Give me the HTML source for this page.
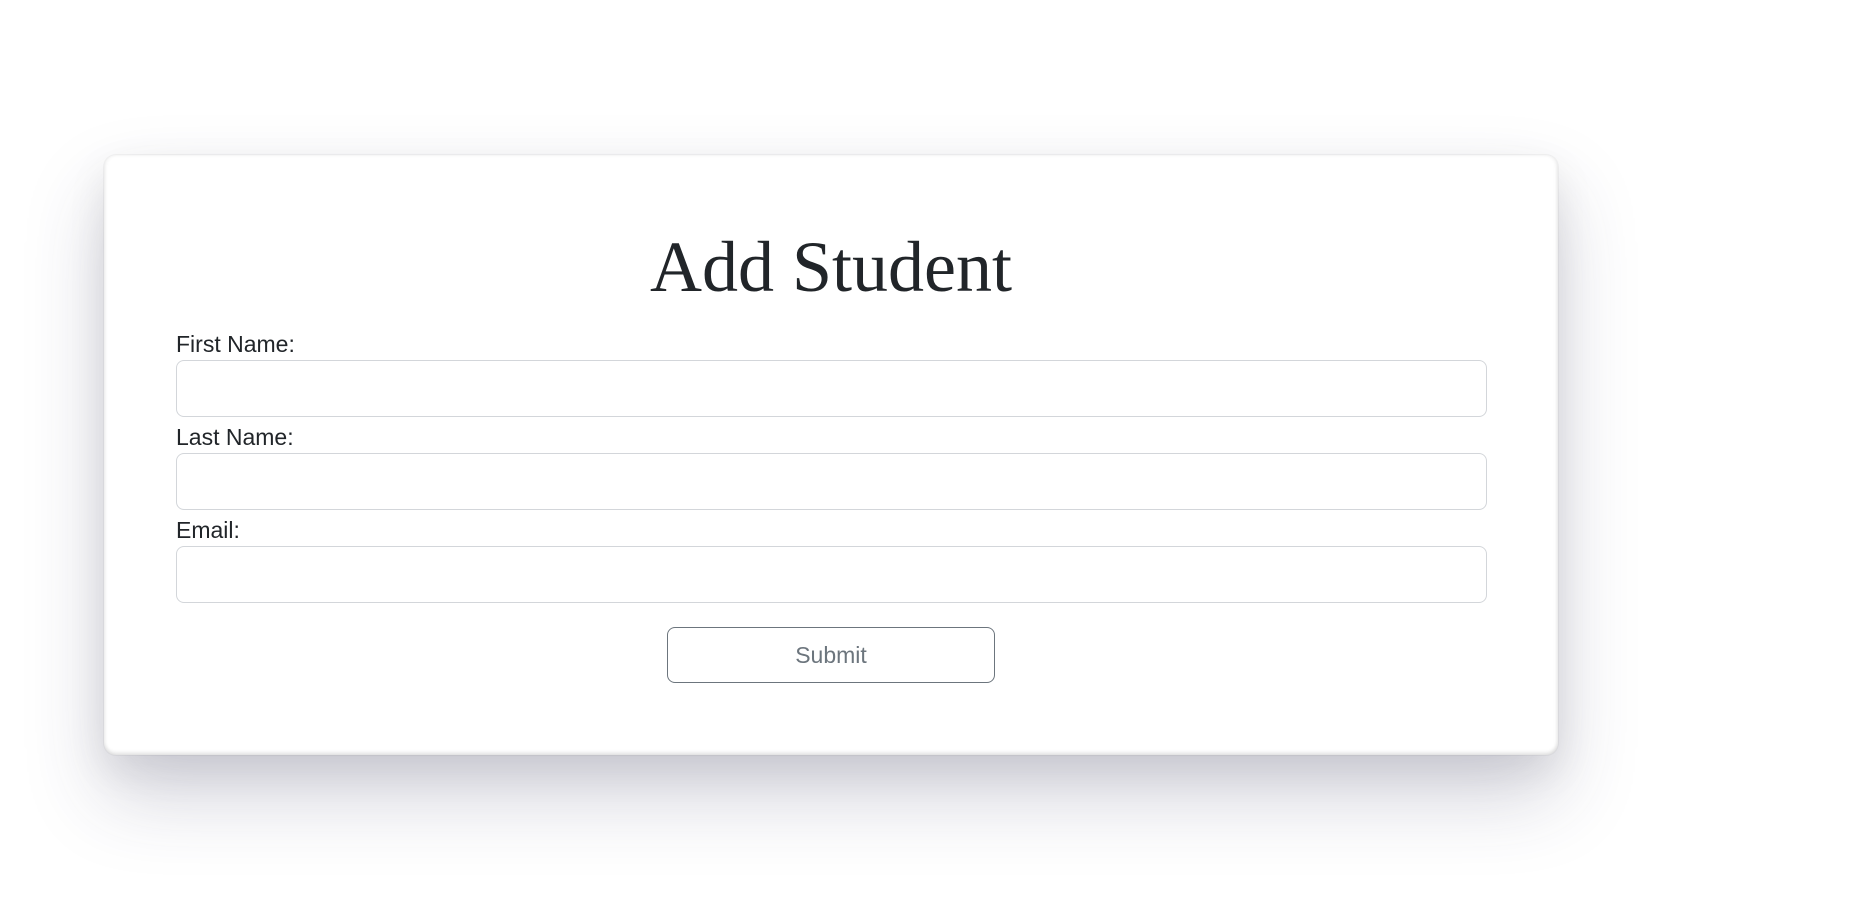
<!DOCTYPE html>
<html><head><style>
html,body{margin:0;padding:0;background:#fff;width:1862px;height:923px;overflow:hidden;}
.card{position:absolute;left:104px;top:155px;width:1454px;height:600px;background:#fff;border-radius:12px;
box-shadow:0 0 0 1px rgba(0,0,0,0.04),inset 0 -3px 3px rgba(0,0,0,0.08),inset -2px 0 3px rgba(0,0,0,0.05),inset 2px 0 3px rgba(0,0,0,0.04),0 40px 80px rgba(50,50,93,0.22),0 15px 40px rgba(0,0,0,0.08);}
h1{position:absolute;left:104px;width:1454px;text-align:center;top:231px;margin:0;font:400 72px/1 "Liberation Serif",serif;color:#212529;}
.lbl{position:absolute;left:176px;font:23px/1 "Liberation Sans",sans-serif;color:#212529;}
.inp{position:absolute;left:176px;width:1309px;height:55px;border:1px solid #d3d6da;border-radius:8px;background:#fff;}
.btn{position:absolute;left:667px;top:627px;width:326px;height:54px;border:1px solid #6c757d;border-radius:8px;text-align:center;font:23px/54px "Liberation Sans",sans-serif;color:#6c757d;}
</style></head><body>
<div class="card"></div>
<h1>Add Student</h1>
<div class="lbl" style="top:333px">First Name:</div>
<div class="inp" style="top:360px"></div>
<div class="lbl" style="top:426px">Last Name:</div>
<div class="inp" style="top:453px"></div>
<div class="lbl" style="top:519px">Email:</div>
<div class="inp" style="top:546px"></div>
<div class="btn">Submit</div>
</body></html>
